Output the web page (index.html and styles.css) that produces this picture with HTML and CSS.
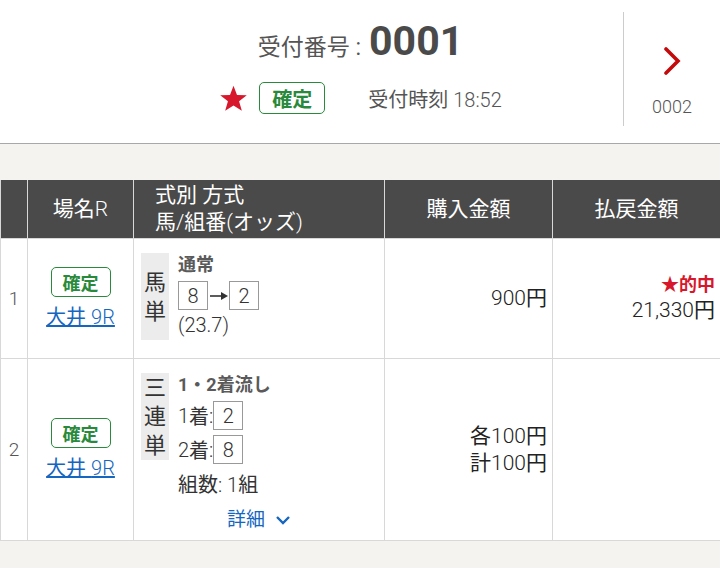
FILE: index.html
```html
<!DOCTYPE html>
<html lang="ja">
<head>
   <meta charset="utf-8">
   <title>投票内容照会</title>
   <meta name="viewport" content="width=device-width, initial-scale=1">
   <link rel="stylesheet" href="styles.css">
</head>
<body>
   <header class="receipt-head">
      <div class="receipt-main">
         <div class="receipt-no">
            <span class="receipt-label">受付番号 :</span>
            <span class="receipt-num">0001</span>
         </div>
         <div class="receipt-meta">
            <svg class="star-icon" viewBox="0 0 24 24" width="29" height="29">
               <polygon points="12,1.5 14.9,9 23,9.3 16.6,14.3 18.9,22.2 12,17.7 5.1,22.2 7.4,14.3 1,9.3 9.1,9" fill="#d7172b"/>
            </svg>
            <span class="badge badge-lg">確定</span>
            <span class="receipt-time">受付時刻 <span class="lt">18:52</span></span>
         </div>
      </div>
      <a class="receipt-next" href="#">
         <svg viewBox="0 0 18 28" width="18" height="28">
            <polyline points="3,2 15,14 3,26" fill="none" stroke="#c40a0a" stroke-width="3.6" stroke-linecap="round" stroke-linejoin="miter"/>
         </svg>
         <span class="next-no lt">0002</span>
      </a>
   </header>

   <table class="bets">
      <colgroup>
         <col class="c-no">
         <col class="c-race">
         <col class="c-type">
         <col class="c-buy">
         <col class="c-pay">
      </colgroup>
      <thead>
         <tr>
            <th></th>
            <th>場名<span class="lt">R</span></th>
            <th class="th-type">式別 方式<br>馬<span class="lt">/</span>組番<span class="lt">(</span>オッズ<span class="lt">)</span></th>
            <th>購入金額</th>
            <th>払戻金額</th>
         </tr>
      </thead>
      <tbody>
         <tr class="row-1">
            <td class="td-no lt">1</td>
            <td class="td-race">
               <span class="badge">確定</span>
               <a class="race-link" href="#">大井 <span class="lt">9R</span></a>
            </td>
            <td class="td-type">
               <div class="bet">
                  <div class="bet-kind">馬<br>単</div>
                  <div class="bet-body">
                     <div class="bet-method">通常</div>
                     <div class="bet-line">
                        <span class="num-box">8</span>
                        <svg class="arrow" viewBox="0 0 20 10" width="20" height="10">
                           <line x1="2" y1="5" x2="14" y2="5" stroke="#333" stroke-width="1.6"/>
                           <polygon points="13,1 20,5 13,9" fill="#333"/>
                        </svg>
                        <span class="num-box">2</span>
                     </div>
                     <div class="bet-odds lt">(23.7)</div>
                  </div>
               </div>
            </td>
            <td class="td-money"><span class="lt">900</span>円</td>
            <td class="td-money">
               <div class="hit">★的中</div>
               <div><span class="lt">21,330</span>円</div>
            </td>
         </tr>
         <tr class="row-2">
            <td class="td-no lt">2</td>
            <td class="td-race">
               <span class="badge">確定</span>
               <a class="race-link" href="#">大井 <span class="lt">9R</span></a>
            </td>
            <td class="td-type">
               <div class="bet">
                  <div class="bet-kind">三<br>連<br>単</div>
                  <div class="bet-body">
                     <div class="bet-method">1・2着流し</div>
                     <div class="bet-line"><span class="lt">1</span>着<span class="lt">:</span><span class="num-box">2</span></div>
                     <div class="bet-line"><span class="lt">2</span>着<span class="lt">:</span><span class="num-box">8</span></div>
                     <div class="bet-count">組数<span class="lt">: 1</span>組</div>
                  </div>
               </div>
               <a class="detail-link" href="#">詳細
                  <svg viewBox="0 0 16 10" width="16" height="10">
                     <polyline points="2,2 8,8 14,2" fill="none" stroke="#1466c0" stroke-width="2.4"/>
                  </svg>
               </a>
            </td>
            <td class="td-money">各<span class="lt">100</span>円<br>計<span class="lt">100</span>円</td>
            <td class="td-money"></td>
         </tr>
      </tbody>
   </table>
</body>
</html>
```

FILE: styles.css
```css
body {
   margin: 0;
   background: #f4f3f0;
   font-family: Roboto, "Noto Sans CJK JP", sans-serif;
   color: #333;
}
a {
   text-decoration: none;
}
/* latin figures are set in the light cut */
.lt {
   font-weight: 300;
}

/* receipt header */
.receipt-head {
   display: flex;
   height: 143px;
   background: #fff;
   border-bottom: 1px solid #a8a8a8;
}
.receipt-main {
   flex: 1;
   padding-left: 98px;
   display: flex;
   flex-direction: column;
   align-items: center;
}
.receipt-no {
   margin-top: 17px;
   height: 48px;
   display: flex;
   align-items: baseline;
   color: #555;
}
.receipt-label {
   font-size: 23px;
   margin-right: 8px;
}
.receipt-num {
   font-size: 41px;
   font-weight: bold;
   line-height: 48px;
   color: #4a4a4a;
}
.receipt-meta {
   margin-top: 17px;
   display: flex;
   align-items: center;
   height: 32px;
}
.star-icon {
   margin-right: 11px;
}
.receipt-time {
   margin-left: 43px;
   font-size: 20px;
   color: #555;
}
.receipt-next {
   width: 97px;
   margin: 12px 0 17px;
   border-left: 1px solid #ccc;
   display: flex;
   flex-direction: column;
   align-items: center;
   padding-top: 35px;
   box-sizing: border-box;
}
.next-no {
   margin-top: 21px;
   font-size: 18px;
   color: #555;
}

/* status badge */
.badge {
   display: inline-flex;
   align-items: center;
   justify-content: center;
   height: 30px;
   padding: 0 11px;
   box-sizing: border-box;
   border: 1px solid #2a8a3c;
   border-radius: 5px;
   color: #2a8a3c;
   font-size: 18px;
   font-weight: bold;
   background: #fff;
}
.badge-lg {
   height: 32px;
   padding: 0 12px;
   font-size: 20px;
}

/* bets table */
.bets {
   margin-top: 36px;
   width: 720px;
   table-layout: fixed;
   border-collapse: collapse;
   background: #fff;
}
.c-no { width: 27px; }
.c-race { width: 106px; }
.c-type { width: 251px; }
.c-buy { width: 168px; }
.c-pay { width: 168px; }
.bets th {
   height: 58px;
   padding: 0;
   background: #4a4a4a;
   color: #fff;
   font-size: 21px;
   font-weight: normal;
   line-height: 27px;
   border: 1px solid #d8d8d8;
   border-top: none;
}
.bets th.th-type {
   text-align: left;
   padding-left: 21px;
}
.bets td {
   border: 1px solid #d8d8d8;
   padding: 0;
   vertical-align: middle;
}
.row-1 {
   height: 120px;
}
.td-no {
   text-align: center;
   font-size: 19px;
   color: #555;
}
.td-race {
   text-align: center;
}
.race-link {
   display: block;
   margin-top: 7px;
   font-size: 20px;
   line-height: 26px;
   color: #1466c0;
   text-decoration: underline;
}
.bets td.td-type {
   padding: 14px 0 7px 7px;
   vertical-align: top;
}
.bet {
   display: flex;
   align-items: flex-start;
}
.bet-kind {
   width: 28px;
   min-height: 87px;
   display: flex;
   align-items: center;
   justify-content: center;
   background: #ececec;
   font-size: 22px;
   line-height: 29px;
   text-align: center;
   color: #333;
}
.bet-body {
   margin-left: 9px;
}
.bet-method {
   font-size: 18px;
   font-weight: bold;
   line-height: 24px;
   color: #5a5a5a;
}
.bet-line {
   display: flex;
   align-items: center;
   margin-top: 4px;
   font-size: 20px;
}
.bet-line + .bet-line {
   margin-top: 5px;
}
.num-box {
   display: inline-flex;
   align-items: center;
   justify-content: center;
   width: 30px;
   height: 29px;
   box-sizing: border-box;
   border: 1px solid #999;
   font-size: 20px;
   font-weight: 300;
}
.arrow {
   margin: 0 1px 0 0;
}
.bet-odds {
   font-size: 20px;
   line-height: 30px;
}
.bet-count {
   margin-top: 6px;
   font-size: 20px;
   line-height: 30px;
}
.detail-link {
   display: flex;
   align-items: center;
   justify-content: center;
   gap: 10px;
   margin-top: 7px;
   padding-right: 7px;
   font-size: 19px;
   line-height: 26px;
   color: #1466c0;
}
.bets td.td-money {
   text-align: right;
   padding-right: 5px;
   font-size: 21px;
   line-height: 27px;
   color: #222;
}
.hit {
   color: #d7172b;
   font-size: 18px;
   font-weight: bold;
   line-height: 24px;
}
```
